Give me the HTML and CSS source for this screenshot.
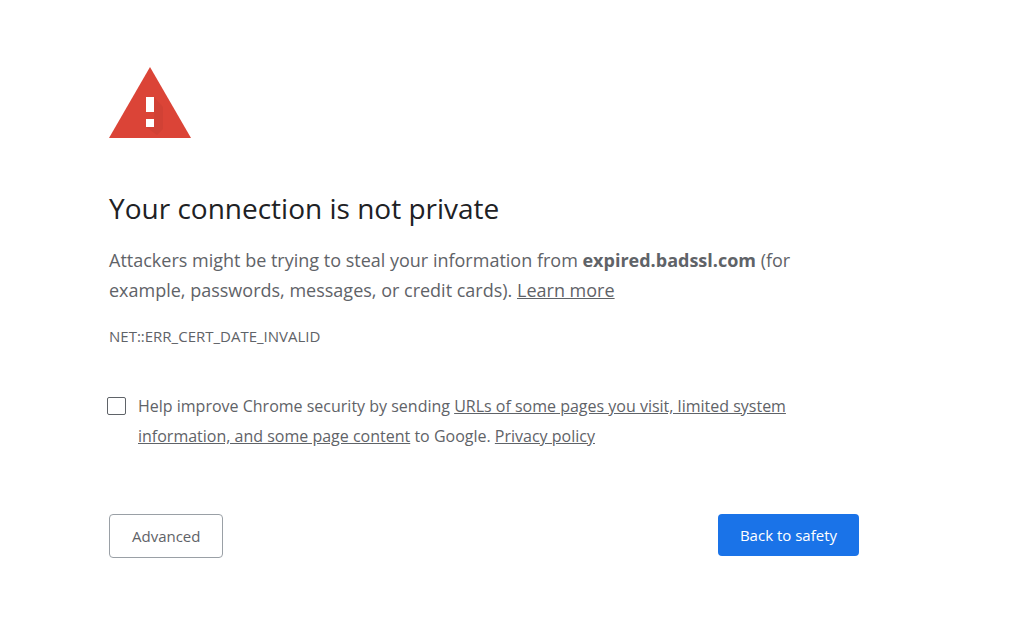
FILE: index.html
```html
<!DOCTYPE html>
<html lang="en">
<head>
    <meta charset="UTF-8">
    <meta name="viewport" content="width=device-width, initial-scale=1.0">
    <title>Privacy error</title>
    <link rel="stylesheet" href="styles.css">
</head>
<body>
    <main class="interstitial">
        <svg class="icon" viewBox="0 0 82 71" aria-hidden="true">
            <path fill="#db4437" d="M41 0L82 71H0z"/>
            <path fill="#c63e33" d="M45 30L54 40V62L48 68L37 60H45z" opacity=".45"/>
            <path fill="#fff" d="M37 30h8v15h-8zM37 52h8v8h-8z"/>
        </svg>
        <h1>Your connection is not private</h1>
        <p class="message">Attackers might be trying to steal your information from <strong>expired.badssl.com</strong> (for example, passwords, messages, or credit cards). <a href="#">Learn more</a></p>
        <div class="error-code">NET::ERR_CERT_DATE_INVALID</div>
        <div class="opt-in">
            <input type="checkbox" id="opt-in-checkbox">
            <label for="opt-in-checkbox">Help improve Chrome security by sending <a href="#">URLs of some pages you visit, limited system information, and some page content</a> to Google. <a href="#">Privacy policy</a></label>
        </div>
        <div class="buttons">
            <button class="secondary" type="button">Advanced</button>
            <button class="primary" type="button">Back to safety</button>
        </div>
    </main>
</body>
</html>
```
FILE: styles.css
```css
body {
    margin: 0;
    background: #fff;
    color: #5f6368;
    font-family: "Segoe UI", "Open Sans", "Noto Sans", sans-serif;
    font-size: 15px;
}
.interstitial {
    box-sizing: border-box;
    max-width: 750px;
    margin: 0 155px 0 109px;
    padding-top: 67px;
}
.icon {
    display: block;
    width: 82px;
    height: 71px;
}
h1 {
    margin: 50px 0 17px;
    color: #202124;
    font-size: 28px;
    font-weight: normal;
    line-height: 40px;
}
.message {
    max-width: 700px;
    margin: 0;
    font-size: 18px;
    line-height: 30px;
}
a {
    color: inherit;
    text-decoration: underline;
}
.error-code {
    margin-top: 21px;
    line-height: 20px;
}
.opt-in {
    display: flex;
    gap: 12px;
    max-width: 700px;
    margin: 45px 0 0 -2px;
    font-size: 16px;
    line-height: 30px;
}
.opt-in input {
    flex: none;
    box-sizing: border-box;
    width: 19px;
    height: 18px;
    margin: 6px 0 0;
    appearance: none;
    background: #fff;
    border: 1px solid #5f6368;
    border-radius: 2px;
}
.opt-in input:checked {
    background: #1a73e8;
}
.buttons {
    display: flex;
    justify-content: space-between;
    align-items: flex-start;
    margin-top: 63px;
}
button {
    padding: 0 22px;
    border-radius: 4px;
    font: inherit;
    line-height: 42px;
    cursor: pointer;
}
.primary {
    background: #1a73e8;
    border: none;
    color: #fff;
}
.secondary {
    background: #fff;
    border: 1px solid #9aa0a6;
    color: #5f6368;
}
```
